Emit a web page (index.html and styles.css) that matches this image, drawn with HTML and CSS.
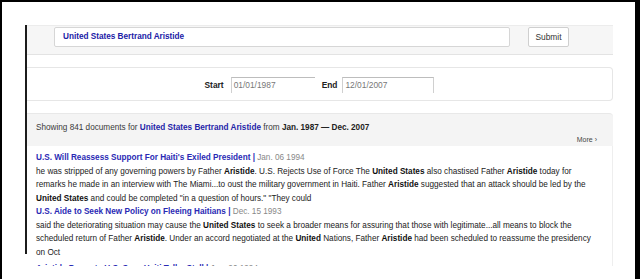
FILE: index.html
```html
<!DOCTYPE html>
<html>
<head>
<meta charset="utf-8">
<link rel="stylesheet" href="styles.css">
</head>
<body>
<div class="frame">
  <div class="clip">
    <div class="page">
      <form class="search">
        <div class="query">United States Bertrand Aristide</div>
        <button class="submit" type="button">Submit</button>
      </form>
      <div class="dates">
        <span class="label">Start</span>
        <span class="date date-start">01/01/1987</span>
        <span class="label">End</span>
        <span class="date date-end">12/01/2007</span>
      </div>
      <div class="summary">
        <p class="showing">Showing 841 documents for <a class="term">United States Bertrand Aristide</a> from <b>Jan. 1987 — Dec. 2007</b></p>
        <p class="more">More ›</p>
      </div>
      <div class="results">
        <div class="result">
          <p class="title"><a>U.S. Will Reassess Support For Haiti's Exiled President</a> <span class="pipe">|</span> <span class="when">Jan. 06 1994</span></p>
          <p class="snippet">he was stripped of any governing powers by Father <b>Aristide</b>. U.S. Rejects Use of Force The <b>United States</b> also chastised Father <b>Aristide</b> today for<br>remarks he made in an interview with The Miami...to oust the military government in Haiti. Father <b>Aristide</b> suggested that an attack should be led by the<br><b>United States</b> and could be completed "in a question of hours." "They could</p>
        </div>
        <div class="result">
          <p class="title"><a>U.S. Aide to Seek New Policy on Fleeing Haitians</a> <span class="pipe">|</span> <span class="when">Dec. 15 1993</span></p>
          <p class="snippet">said the deteriorating situation may cause the <b>United States</b> to seek a broader means for assuring that those with legitimate...all means to block the<br>scheduled return of Father <b>Aristide</b>. Under an accord negotiated at the <b>United</b> Nations, Father <b>Aristide</b> had been scheduled to reassume the presidency<br>on Oct</p>
        </div>
        <div class="result result-last">
          <p class="title"><a>Aristide Prompts U.S. Says Haiti Talks Stall</a> <span class="pipe">|</span> <span class="when">Jan. 20 1994</span></p>
        </div>
      </div>
    </div>
  </div>
</div>
</body>
</html>
```
FILE: styles.css
```css
html, body {
  margin: 0;
  padding: 0;
  background: #fff;
}
body {
  font-family: "Liberation Sans", Arial, sans-serif;
  font-size: 8.2px;
  color: #222;
}
p { margin: 0; }
a { color: #2424a8; font-weight: bold; text-decoration: none; }

.frame {
  box-sizing: border-box;
  width: 640px;
  height: 279px;
  border-top: 2px solid #000;
  border-left: 2px solid #000;
  border-right: 5px solid #000;
  padding: 23px 22px 0 23px;
}
.clip {
  height: 241px;
  overflow: hidden;
}
.page {
  height: 229px;
  border-left: 2px solid #1c1c1c;
}

.search {
  margin: 0;
  box-sizing: border-box;
  height: 30px;
  background: #f6f6f6;
  border-top: 1px solid #ececec;
  border-bottom: 1px solid #e3e3e3;
  display: flex;
  align-items: flex-start;
  gap: 18px;
  padding: 1px 0 0 27px;
}
.query {
  box-sizing: border-box;
  width: 456px;
  height: 20px;
  background: #fff;
  border: 1px solid #d6d6d6;
  border-radius: 2px;
  color: #2020a6;
  font-weight: bold;
  font-size: 8.2px;
  line-height: 18px;
  padding-left: 8px;
}
.submit {
  box-sizing: border-box;
  width: 41px;
  height: 20px;
  background: #fff;
  border: 1px solid #cfcfcf;
  border-radius: 2px;
  font-family: inherit;
  font-size: 8.4px;
  color: #333;
  padding: 0;
}

.dates {
  margin-top: 12px;
  box-sizing: border-box;
  height: 34px;
  border: 1px solid #e6e6e6;
  border-left: none;
  border-radius: 0 4px 4px 0;
  display: flex;
  align-items: center;
  justify-content: center;
  padding-top: 2px;
  font-size: 8.4px;
}
.label {
  font-weight: bold;
  color: #222;
  margin-right: 5px;
}
.date {
  box-sizing: border-box;
  height: 16px;
  line-height: 15px;
  color: #777;
  padding-left: 2px;
  border-top: 1px solid #bdbdbd;
  border-left: 1px solid #d0d0d0;
}
.date-start {
  width: 84px;
  margin-right: 7px;
  margin-left: 2px;
}
.date-end {
  width: 92px;
  border-right: 1px solid #d0d0d0;
}

.summary {
  margin-top: 12px;
  box-sizing: border-box;
  height: 33px;
  background: #f4f4f4;
  border-top: 1px solid #e8e8e8;
  border-radius: 0 4px 0 0;
  padding: 7px 16px 0 9px;
}
.showing {
  line-height: 13px;
  color: #3a3a3a;
}
.showing b { color: #222; }
.more {
  text-align: right;
  font-size: 7px;
  line-height: 11px;
  color: #444;
}

.results {
  height: 140px;
  border-right: 1px solid #eeeeee;
  padding: 5px 0 0 9px;
  line-height: 13.5px;
  white-space: nowrap;
}
.result-last { margin-top: 3px; }
.title a { color: #2a2ab4; }
.pipe { color: #2a2ab4; font-weight: bold; }
.when { color: #888; }
.snippet { color: #222; }
.snippet b { color: #111; }
```
